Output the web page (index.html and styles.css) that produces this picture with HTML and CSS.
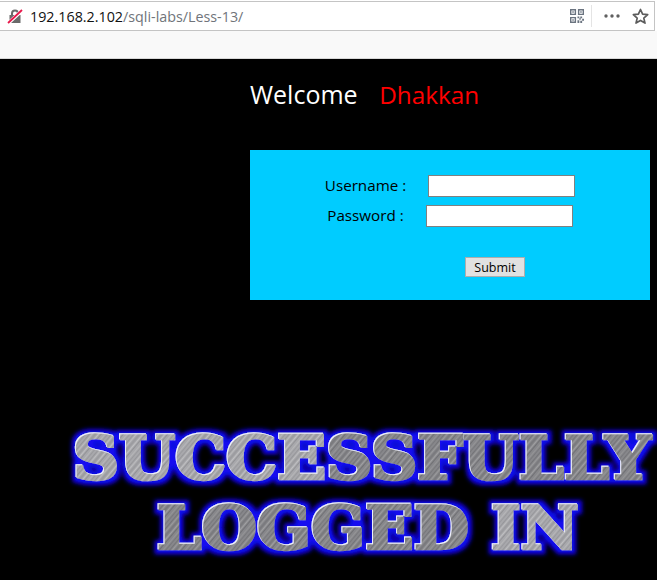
FILE: index.html
```html
<!DOCTYPE html>
<html lang="en">
<head>
<meta charset="UTF-8">
<title>Less-13</title>
<link rel="stylesheet" href="styles.css">
</head>
<body>

<div class="urlbar">
    <svg class="lock" width="16" height="16" viewBox="0 0 16 16">
        <path d="M4 7V5.500a4 4 0 0 1 8 0V7h1.500v8h-11V7z M6 7h4V5.500a2 2 0 0 0-4 0z" fill="#6a6a6a" fill-rule="evenodd"/>
        <path d="M1 15.500 15 2.500" stroke="#fff" stroke-width="3.400"/>
        <path d="M1 15 15 2" stroke="#e8174a" stroke-width="1.800"/>
    </svg>
    <div class="url">192.168.2.102<span class="url-path">/sqli-labs/Less-13/</span></div>
    <svg class="qr" width="14" height="14" viewBox="0 0 15 15" fill="#6b7480">
        <path fill-rule="evenodd" d="M0 0h6.500v6.500H0z M1.500 1.500v3.500h3.500v-3.500z M8.500 0H15v6.500H8.500z M10 1.500v3.500h3.500v-3.500z M0 8.500h6.500V15H0z M1.500 10v3.500h3.500V10z"/>
        <path d="M2.500 2.500h1.500V4H2.500z M11 2.500h1.500V4H11z M2.500 11h1.500v1.500H2.500z M8 8h2v2H8z M11 8h2v2h-2z M10 10h1.500v1.500H10z M13 10.500h2v2h-2z M8 12h2v3H8z M11 12.500h2v2.500h-2z"/>
    </svg>
    <div class="sep"></div>
    <svg class="dots" width="16" height="4" viewBox="0 0 16 4" fill="#606060">
        <circle cx="2" cy="2" r="1.700"/><circle cx="8" cy="2" r="1.700"/><circle cx="14" cy="2" r="1.700"/>
    </svg>
    <svg class="star" width="17" height="17" viewBox="0 0 17 17">
        <path d="M8.500 1.500l2.100 4.700 5.100.5-3.900 3.400 1.200 5-4.500-2.700-4.500 2.700 1.200-5L1.300 6.700l5.100-.5z" fill="none" stroke="#5c5c5c" stroke-width="1.700" stroke-linejoin="round"/>
    </svg>
</div>
<div class="toolbar"></div>

<div class="page">
    <div class="welcome">Welcome <span class="name">Dhakkan</span></div>

    <form class="login">
        <div class="row">
            <label>Username :</label>
            <input type="text" name="uname">
        </div>
        <div class="row">
            <label>Password :</label>
            <input type="password" name="passwd">
        </div>
        <div class="row-submit">
            <input type="submit" name="submit" value="Submit">
        </div>
    </form>

    <svg class="banner" width="597" height="150" viewBox="0 0 597 150">
        <defs>
            <pattern id="brushed" width="17" height="17" patternUnits="userSpaceOnUse" patternTransform="rotate(-50)">
                <rect width="17" height="17" fill="#a8a8ac"/>
                <rect y="1" width="17" height="1" fill="#96969a"/>
                <rect y="3" width="17" height="1" fill="#bcbcbe"/>
                <rect y="5" width="17" height="2" fill="#9c9ca0"/>
                <rect y="8" width="17" height="1" fill="#c0c0c2"/>
                <rect y="10" width="17" height="1" fill="#929296"/>
                <rect y="13" width="17" height="1" fill="#b6b6b8"/>
                <rect y="15" width="17" height="1" fill="#9a9a9e"/>
            </pattern>
            <pattern id="brushed-dark" width="17" height="17" patternUnits="userSpaceOnUse" patternTransform="rotate(-50)">
                <rect width="17" height="17" fill="#87878b"/>
                <rect y="1" width="17" height="1" fill="#747478"/>
                <rect y="3" width="17" height="1" fill="#9a9a9c"/>
                <rect y="5" width="17" height="2" fill="#7a7a7e"/>
                <rect y="8" width="17" height="1" fill="#a0a0a2"/>
                <rect y="10" width="17" height="1" fill="#707074"/>
                <rect y="13" width="17" height="1" fill="#949496"/>
                <rect y="15" width="17" height="1" fill="#78787c"/>
            </pattern>
            <filter id="glow" x="-5%" y="-20%" width="110%" height="140%">
                <feMorphology in="SourceAlpha" operator="dilate" radius="4" result="fat"/>
                <feGaussianBlur in="fat" stdDeviation="2" result="soft"/>
                <feFlood flood-color="#1208f0"/>
                <feComposite in2="soft" operator="in" result="blue"/>
                <feOffset in="SourceAlpha" dx="-0.800" dy="-0.800" result="moved"/>
                <feFlood flood-color="#eef0fa"/>
                <feComposite in2="moved" operator="in" result="edge"/>
                <feMerge>
                    <feMergeNode in="blue"/>
                    <feMergeNode in="edge"/>
                    <feMergeNode in="SourceGraphic"/>
                </feMerge>
            </filter>
        </defs>
        <g class="banner-text" filter="url(#glow)">
            <text x="13" y="64.700" textLength="578" lengthAdjust="spacingAndGlyphs"><tspan>SUCCE</tspan><tspan class="dark">SSFULLY</tspan></text>
            <text x="97" y="134.700" textLength="422" lengthAdjust="spacingAndGlyphs"><tspan class="dark">LOGGED</tspan><tspan> IN</tspan></text>
        </g>
    </svg>
</div>

</body>
</html>
```

FILE: styles.css
```css
html, body {
    margin: 0;
    padding: 0;
    height: 580px;
    overflow: hidden;
    background: #fff;
}

body {
    box-sizing: border-box;
    padding-top: 1px;
    font-family: "Open Sans", "Noto Sans", sans-serif;
}

.urlbar {
    box-sizing: border-box;
    width: 655px;
    height: 30px;
    padding: 0 5px 0 7px;
    display: flex;
    align-items: center;
    background: #fff;
    border-top: 1px solid #c4c4c4;
    border-bottom: 1px solid #c4c4c4;
    border-right: 1px solid #c4c4c4;
}

.url {
    flex: 1;
    margin-left: 7px;
    font-size: 14.300px;
    color: #111;
}

.url-path {
    color: #70747a;
}

.sep {
    width: 1px;
    height: 22px;
    margin: 0 12px 0 7px;
    background: #e4e4e4;
}

.star {
    margin-left: 12px;
}

.toolbar {
    height: 27px;
    background: #f9f9f9;
    border-bottom: 1px solid #d8d8d8;
}

.page {
    box-sizing: border-box;
    height: 521px;
    padding-top: 17px;
    background: #000;
}

.welcome {
    margin-left: 250px;
    font-size: 25px;
    line-height: 36px;
    color: #fff;
}

.name {
    margin-left: 15px;
    font-size: 24.300px;
    color: #f00;
}

.login {
    box-sizing: border-box;
    width: 400px;
    height: 150px;
    margin: 37px 0 0 250px;
    padding-top: 25px;
    background: #0cf;
}

.row {
    display: flex;
    justify-content: center;
    align-items: center;
    gap: 22px;
    height: 22px;
    margin-bottom: 8px;
    font-size: 15.200px;
    color: #000;
}

.row label {
    padding-bottom: 2px;
}

.row input {
    box-sizing: border-box;
    width: 147px;
    height: 22px;
    margin: 0;
    border: 1px solid #808080;
    background: #fff;
}

.row-submit {
    display: flex;
    justify-content: center;
    margin-top: 30px;
    padding-left: 90px;
}

.row-submit input {
    box-sizing: border-box;
    width: 60px;
    height: 20px;
    padding: 0;
    font-family: "Open Sans", sans-serif;
    font-size: 12.500px;
    background: #e1e1e1;
    border: 1px solid #adadad;
    color: #000;
}

.banner {
    display: block;
    margin: 114px 0 0 60px;
}

.banner-text {
    font-family: "DejaVu Serif", serif;
    font-weight: bold;
    font-size: 60px;
    fill: url(#brushed);
    stroke: url(#brushed);
    stroke-width: 2.600px;
}

.banner-text .dark {
    fill: url(#brushed-dark);
    stroke: url(#brushed-dark);
}
```
